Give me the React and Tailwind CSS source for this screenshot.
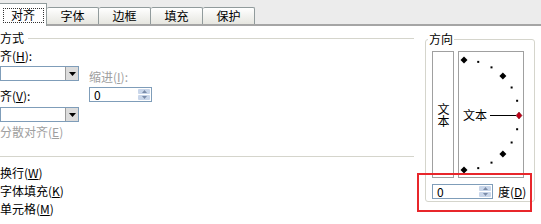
import React from 'react';

const font = { fontFamily: '"Noto Sans CJK SC", "Noto Sans", sans-serif' };

const tabs = ['字体', '边框', '填充', '保护'];

const Dropdown = () => (
    <div className="flex h-[15px] w-[79px] border border-[#7f9db9] bg-white">
        <div className="flex-1" />
        <div className="flex w-[13px] items-center justify-center border-l border-[#9a9a9a] bg-[#dcdcdc]">
            <svg width="7" height="4" viewBox="0 0 7 4">
                <path d="M0 0h7L3.5 4z" fill="#000" />
            </svg>
        </div>
    </div>
);

const Spinner = ({ w }) => (
    <div className={`flex h-[15px] ${w} border border-[#7f9db9] bg-white`}>
        <div className="flex-1 pl-[4px] text-[12px] leading-[13px] text-black">0</div>
        <div className="flex w-[14px] flex-col gap-px bg-white p-px">
            <div className="flex flex-1 items-center justify-center rounded-[1px] bg-[#c9d6ea]">
                <svg width="5" height="3" viewBox="0 0 5 3"><path d="M0 3h5L2.5 0z" fill="#7a8ba8" /></svg>
            </div>
            <div className="flex flex-1 items-center justify-center rounded-[1px] bg-[#c9d6ea]">
                <svg width="5" height="3" viewBox="0 0 5 3"><path d="M0 0h5L2.5 3z" fill="#7a8ba8" /></svg>
            </div>
        </div>
    </div>
);

const Dial = () => {
    const cx = 5;
    const cy = 63;
    const r = 55;
    const angles = [90, 75, 60, 45, 30, 15, -15, -30, -45, -60, -75, -90];
    return (
        <svg width="64" height="125" viewBox="0 0 64 125">
            {angles.map((a) => {
                const x = cx + r * Math.cos((a * Math.PI) / 180);
                const y = cy - r * Math.sin((a * Math.PI) / 180);
                const big = a % 45 === 0;
                return big ? (
                    <path key={a} d={`M${x} ${y - 3.5}L${x + 3.5} ${y}L${x} ${y + 3.5}L${x - 3.5} ${y}z`} fill="#000" />
                ) : (
                    <rect key={a} x={x - 1} y={y - 1} width="2" height="2" fill="#000" />
                );
            })}
            <text x="4" y="67.5" fontSize="12" fill="#000" style={font}>文本</text>
            <line x1="31" y1="63.5" x2="57" y2="63.5" stroke="#000" strokeWidth="1" />
            <path d="M60 60L63 63.5L60 67L57 63.5z" fill="#c0001a" stroke="#600" strokeWidth="0.5" />
        </svg>
    );
};

const App = () => {
    return (
        <div className="relative h-[224px] w-[541px] overflow-hidden bg-white text-[12px] text-black" style={font}>
            {/* tab strip */}
            <div className="flex h-[26px] items-end border-b-2 border-[#a5a5a5] bg-[#ececec]">
                <div className="-mb-[2px] -ml-[4px] flex h-[23px] w-[51px] items-center justify-center border-r border-t border-[#919b9c] bg-white pl-[4px]">
                    <div className="flex h-[15px] w-[41px] items-center justify-center border border-dotted border-[#333] leading-[12px]">对齐</div>
                </div>
                {tabs.map((t) => (
                    <div
                        key={t}
                        className="flex h-[17px] w-[52px] items-center justify-center rounded-t-[2px] border-r border-t border-[#919b9c] bg-gradient-to-b from-white to-[#e6e6e0] leading-[12px]"
                    >
                        {t}
                    </div>
                ))}
            </div>

            <div className="flex">
                {/* left: 文本对齐方式 + 文本控制 */}
                <div className="w-[414px]">
                    <div className="mt-[5px] flex h-[14px] items-center">
                        <span className="leading-[14px]">方式</span>
                        <div className="ml-[4px] h-px flex-1 bg-[#d5d5cc]" />
                    </div>
                    <div className="mt-[4px] h-[14px] leading-[14px]">齐(<u>H</u>):</div>
                    <div className="mt-[3px] flex">
                        <div className="w-[79px]">
                            <Dropdown />
                            <div className="mt-[8px] h-[14px] leading-[14px]">齐(<u>V</u>):</div>
                            <div className="mt-[4px]">
                                <Dropdown />
                            </div>
                        </div>
                        <div className="ml-[10px]">
                            <div className="mt-[4px] h-[14px] leading-[14px] text-[#a0a0a0]">缩进(<u>I</u>):</div>
                            <div className="mt-[3px]">
                                <Spinner w="w-[63px]" />
                            </div>
                        </div>
                    </div>
                    <div className="mt-[3px] h-[14px] leading-[14px] text-[#a0a0a0]">分散对齐(<u>E</u>)</div>
                    <div className="mt-[17px] h-px bg-[#d5d5cc]" />
                    <div className="mt-[7px]">
                        <div className="h-[18px] leading-[18px]">换行(<u>W</u>)</div>
                        <div className="h-[18px] leading-[18px]">字体填充(<u>K</u>)</div>
                        <div className="h-[18px] leading-[18px]">单元格(<u>M</u>)</div>
                    </div>
                </div>

                {/* right: 方向 */}
                <div className="flex-1">
                    <div className="relative ml-[11px] mt-[13px] h-[163px] w-[110px] rounded-[3px] border border-[#d5d5cc] pl-[6px] pt-[11px]">
                        <span className="absolute -top-[8px] left-[2px] bg-white px-px leading-[14px]">方向</span>
                        <div className="flex gap-[4px]">
                            <div className="flex h-[127px] w-[22px] items-center justify-center border border-[#a0a0a0]">
                                <span className="leading-[14px] [text-orientation:upright] [writing-mode:vertical-rl]">文本</span>
                            </div>
                            <div className="h-[127px] w-[66px] border border-[#a0a0a0]">
                                <Dial />
                            </div>
                        </div>
                        <div className="mt-[6px] flex items-center">
                            <Spinner w="w-[61px]" />
                            <span className="ml-[5px] leading-[14px]">度(<u>D</u>)</span>
                        </div>
                    </div>
                </div>
            </div>

            {/* red annotation box */}
            <div className="absolute left-[417px] top-[173px] h-[39px] w-[115px] border-2 border-[#e8262b]" />
        </div>
    );
};

export default App;
